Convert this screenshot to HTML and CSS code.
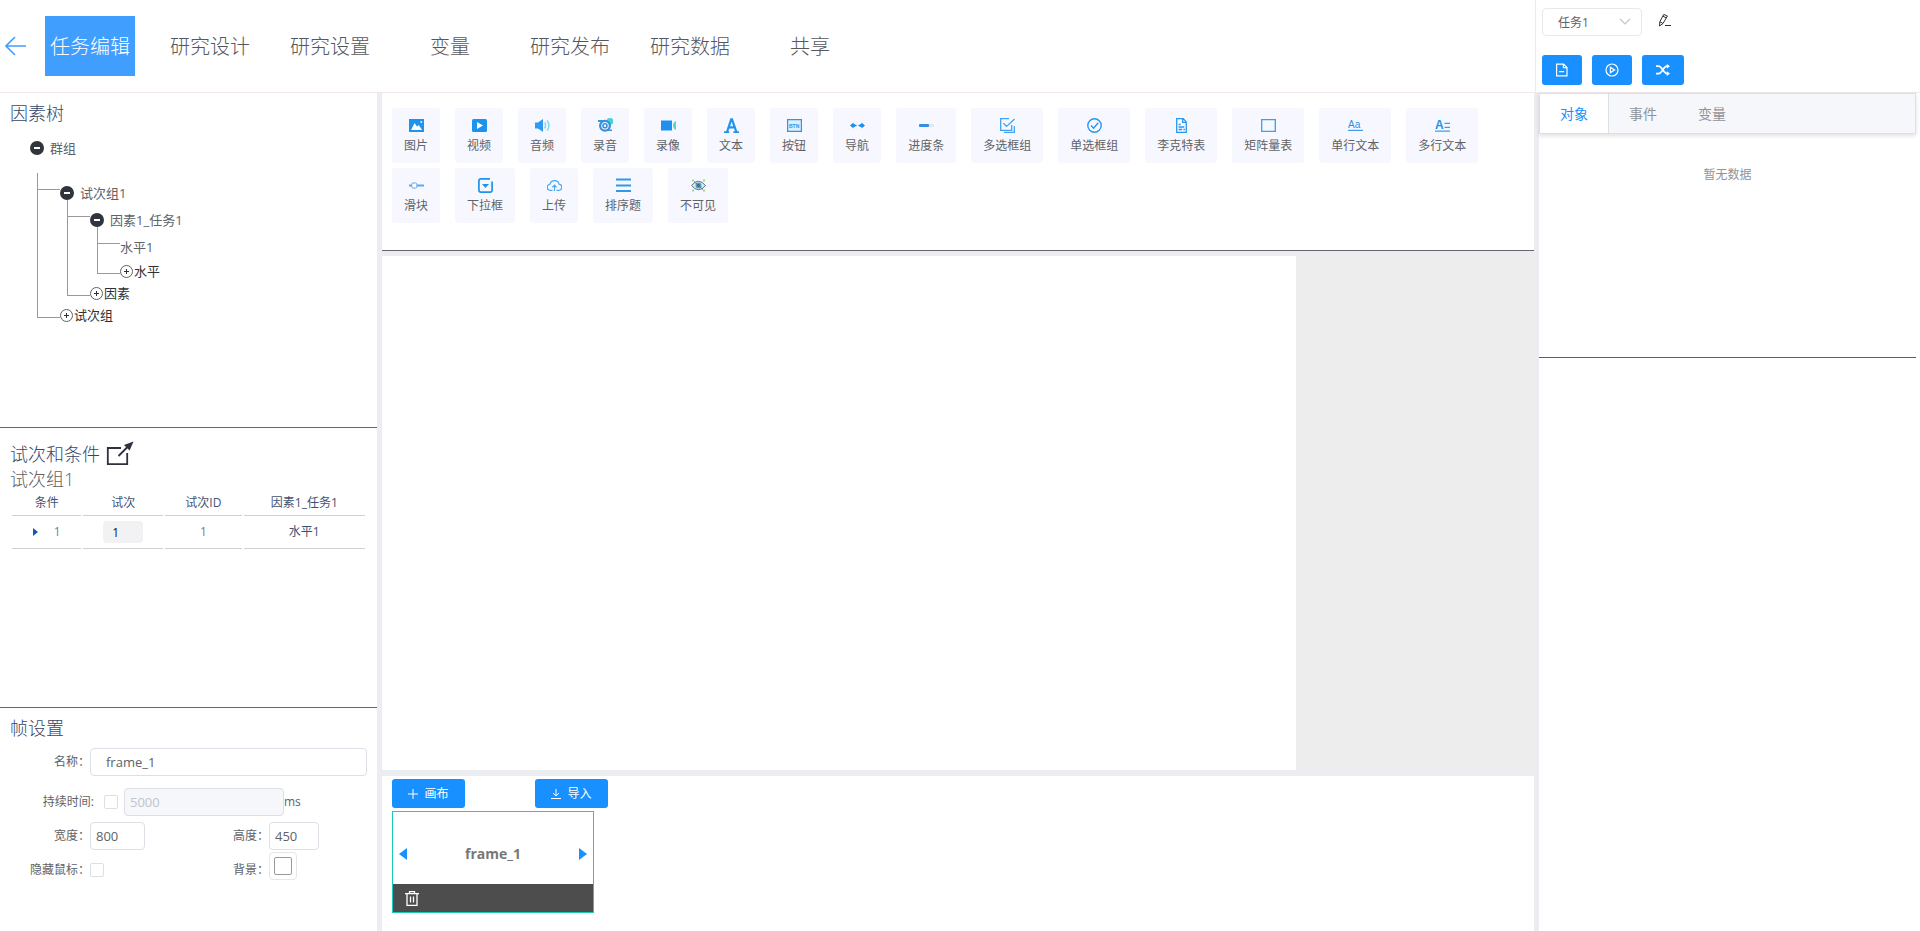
FILE: index.html
```html
<!DOCTYPE html>
<html lang="zh-CN">
<head>
<meta charset="utf-8">
<meta name="viewport" content="width=device-width, initial-scale=1">
<title>任务编辑</title>
<link rel="stylesheet" href="styles.css">
</head>
<body>
<div class="app">
  <header class="topbar">
    <nav class="topnav">
      <a class="back" href="#" aria-label="返回"><svg width="21" height="20" viewBox="0 0 21 20"><path d="M10 1 1 10l9 9M1 10h20" fill="none" stroke="#409eff" stroke-width="1.6"/></svg></a>
      <a class="navlink navlink-active" href="#">任务编辑</a>
      <a class="navlink" href="#">研究设计</a>
      <a class="navlink" href="#">研究设置</a>
      <a class="navlink" href="#">变量</a>
      <a class="navlink" href="#">研究发布</a>
      <a class="navlink" href="#">研究数据</a>
      <a class="navlink" href="#">共享</a>
    </nav>
    <div class="taskbar">
      <div class="taskrow">
        <div class="picker">
          <select class="picker-select" aria-label="任务"><option>任务1</option></select>
          <svg class="picker-arrow" width="12" height="8" viewBox="0 0 12 8"><path d="m1 1 5 5 5-5" fill="none" stroke="#c0c4cc" stroke-width="1.2"/></svg>
        </div>
        <button class="iconbtn" type="button" aria-label="编辑"><svg width="14" height="14" viewBox="0 0 14 14" fill="none" stroke="#303133"><path d="M5.8 1.4 9.400 3 5 10.500 1.500 13l.3-4.200zM4.800 3.100 8.400 4.900M1.900 8.700 5 10.500M7 12.500h6"/></svg></button>
      </div>
      <div class="taskrow taskrow-actions">
        <button class="primary primary-icon" type="button" aria-label="文件"><svg width="14" height="14" viewBox="0 0 14 14" fill="none" stroke="#fff" stroke-width="1.2"><path d="M1.6 1.1h7L12 4.4v8.5H1.6zM8.4 1.2v3.5H12M4.2 8.6h5"/></svg></button>
        <button class="primary primary-icon" type="button" aria-label="运行"><svg width="14" height="14" viewBox="0 0 14 14" fill="none" stroke="#fff" stroke-width="1.2"><circle cx="7" cy="7" r="6"/><path d="M5.4 4.4v5.2L9.6 7z"/></svg></button>
        <button class="primary primary-icon primary-wide" type="button" aria-label="随机"><svg width="14" height="12" viewBox="0 0 14 12"><path d="M0 2.2h2.6c3.2 0 5 7.4 8.4 7.4h1M0 9.6h2.6c3.2 0 5-7.4 8.4-7.4h1" fill="none" stroke="#fff" stroke-width="1.7"/><path d="M10.8 0 14 2.2l-3.2 2.4zM10.8 7.2 14 9.6 10.8 12z" fill="#fff"/></svg></button>
      </div>
    </div>
  </header>

  <main class="workspace">
    <aside class="leftcol">
      <section class="panel panel-tree">
        <h2 class="title">因素树</h2>
        <div class="node root"><span class="minus"></span><span class="node-name">群组</span></div>
        <ul class="tree">
          <li class="branch">
            <div class="node"><span class="minus"></span><span class="node-name">试次组1</span></div>
            <ul class="subtree">
              <li class="branch">
                <div class="node"><span class="minus"></span><span class="node-name">因素1_任务1</span></div>
                <ul class="subtree">
                  <li class="branch"><div class="node">水平1</div></li>
                  <li class="branch branch-add"><button class="add" type="button"><span class="plus"></span>水平</button></li>
                </ul>
              </li>
              <li class="branch branch-add"><button class="add" type="button"><span class="plus"></span>因素</button></li>
            </ul>
          </li>
          <li class="branch branch-add"><button class="add" type="button"><span class="plus"></span>试次组</button></li>
        </ul>
      </section>

      <section class="panel panel-trials">
        <div class="titlerow">
          <h2 class="title">试次和条件</h2>
          <button class="iconbtn" type="button" aria-label="展开"><svg width="28" height="25" viewBox="0 0 28 25"><path d="M15 7H1.8v16.2h19.4V12M12.5 15 22 5.5" fill="none" stroke="#303040" stroke-width="1.8"/><path d="M27.5.5 23.6 9.6 18 4z" fill="#303040"/></svg></button>
        </div>
        <p class="groupname">试次组1</p>
        <table class="trials">
          <colgroup><col class="c1"><col class="c2"><col class="c3"><col class="c4"></colgroup>
          <thead><tr><th>条件</th><th>试次</th><th>试次ID</th><th>因素1_任务1</th></tr></thead>
          <tbody><tr>
            <td class="muted"><span class="cond"><svg width="5" height="8" viewBox="0 0 5 8"><path d="M0 0v8l5-4z" fill="#1557b8"/></svg>1</span></td>
            <td><input class="trialcount" aria-label="试次" value="1"></td>
            <td class="muted">1</td>
            <td>水平1</td>
          </tr></tbody>
        </table>
      </section>

      <section class="panel panel-frame">
        <h2 class="title">帧设置</h2>
        <form class="form">
          <div class="row row-name"><label class="label" for="name">名称：</label><input class="field field-name" id="name" value="frame_1"></div>
          <div class="row row-time"><label class="label label-time" for="usetime">持续时间:</label><input class="check" type="checkbox" id="usetime"><input class="field field-time" aria-label="持续时间毫秒" value="5000" disabled><span>ms</span></div>
          <div class="row row-pair">
            <div class="row"><label class="label" for="w">宽度：</label><input class="field field-w" id="w" value="800"></div>
            <div class="row"><label class="label" for="h">高度：</label><input class="field field-h" id="h" value="450"></div>
          </div>
          <div class="row row-pair row-last">
            <div class="row"><label class="label" for="hide">隐藏鼠标：</label><input class="check" type="checkbox" id="hide"></div>
            <div class="row"><label class="label" for="bg">背景：</label><button class="swatch" type="button" id="bg" aria-label="背景颜色"><span class="swatch-color"></span></button></div>
          </div>
        </form>
      </section>
    </aside>

    <div class="center">
      <section class="toolbox">
        <button class="tool" type="button"><svg class="ico" viewBox="0 0 15 15"><path d="M0 1h15v13H0z" fill="#1e93ec"/><path d="m2 12 3.6-7L8 8.6 9.8 7l3.2 5zM11.4 3.2h1.8v1.6h-1.8z" fill="#fff"/></svg>图片</button>
        <button class="tool" type="button"><svg class="ico" viewBox="0 0 15 15"><rect y="1" width="15" height="13" rx="1.5" fill="#1e93ec"/><path d="m5 4 6 3.5L5 11z" fill="#fff"/></svg>视频</button>
        <button class="tool" type="button"><svg class="ico" viewBox="0 0 15 15"><path d="M0 4.5h3L8 1v13L3 10.5H0z" fill="#2e9bee"/><path d="M9.6 4.5q2 3 0 6M12 2.5q4 5 0 10" fill="none" stroke="#7fd8f2" stroke-width="1.5"/></svg>音频</button>
        <button class="tool" type="button"><svg class="ico" viewBox="0 0 15 15"><circle cx="12" cy="3.4" r="3.4" fill="#3fd8d0"/><path d="M0 2h6v2H0zM9 11.500h5v1.500H9z" fill="#3b95dd"/><circle cx="7" cy="7.800" r="6" fill="#3b8fdc"/><circle cx="7" cy="7.800" r="3.400" fill="none" stroke="#fff"/><circle cx="7" cy="7.800" r="1.200" fill="#fff"/></svg>录音</button>
        <button class="tool" type="button"><svg class="ico" viewBox="0 0 15 15"><path d="M0 2.5h11v10H0z" fill="#2090ee"/><path d="M15 3v9q-3-1.4-3-4.5T15 3z" fill="#58d5cf"/></svg>录像</button>
        <button class="tool" type="button"><svg class="ico" viewBox="0 0 15 15"><path d="M3 14 7.2 1.4h.8L12.4 14M4.6 9.3h6" fill="none" stroke="#2492e8" stroke-width="2.2"/><path d="M0 13.2h5.2V15H0zM9.4 13.2H15V15H9.4z" fill="#2492e8"/></svg>文本</button>
        <button class="tool" type="button"><svg class="ico" viewBox="0 0 15 15"><path d="M.6 1.6h13.8v11.8H.6z" fill="#deeffc" stroke="#2b96ea" stroke-width="1.2"/><text x="2" y="10" class="ico-letter ico-letter-xs">BTN</text></svg>按钮</button>
        <button class="tool" type="button"><svg class="ico" viewBox="0 0 15 15"><path d="M1 7.5h13" stroke="#1f90ea" stroke-width="1.4" stroke-dasharray="5.6 1.8"/><path d="M0 7.5 3.5 4.6v5.8zM15 7.5l-3.5-2.9v5.8z" fill="#1f90ea"/><circle cx="3.6" cy="7.5" r="1.8" fill="#1f90ea"/><circle cx="11.4" cy="7.5" r="1.8" fill="#1f90ea"/></svg>导航</button>
        <button class="tool" type="button"><svg class="ico" viewBox="0 0 15 15"><rect y="6" width="15" height="3" rx="1" fill="#e2e6ec"/><rect y="6" width="10" height="3" rx="1" fill="#318fe5"/></svg>进度条</button>
        <button class="tool" type="button"><svg class="ico" viewBox="0 0 15 15"><path d="M9 .7H.7v11.6h11V7M4 14.4h10.4V8M3.4 5.2l3.2 3.2L14.6 1" fill="none" stroke="#41a3ef" stroke-width="1.3"/></svg>多选框组</button>
        <button class="tool" type="button"><svg class="ico" viewBox="0 0 15 15"><circle cx="7.5" cy="7.5" r="6.7" fill="none" stroke="#2a97ed" stroke-width="1.4"/><path d="m4 7.4 2.6 2.8 4.6-5.4" fill="none" stroke="#2a97ed" stroke-width="1.4"/></svg>单选框组</button>
        <button class="tool" type="button"><svg class="ico" viewBox="0 0 15 15"><path d="M2.7.7h6.6l3 3.2v10.4H2.7zM8.6.8v3.6h3.6M4.6 6.5h2M4.6 9h5.6M4.6 11.5h3.6M9.5 11.5h1.4" fill="none" stroke="#2a97ed" stroke-width="1.3"/></svg>李克特表</button>
        <button class="tool" type="button"><svg class="ico" viewBox="0 0 15 15"><path d="M.7 1.7h13.6v11.6H.7z" fill="none" stroke="#3b9fee" stroke-width="1.3"/></svg>矩阵量表</button>
        <button class="tool" type="button"><svg class="ico" viewBox="0 0 15 15"><text x="0" y="10" class="ico-letter ico-letter-s">Aa</text><path d="M0 12.4h15" stroke="#3b9fee" stroke-width="1.2"/></svg>单行文本</button>
        <button class="tool" type="button"><svg class="ico" viewBox="0 0 15 15"><text x="0" y="11" class="ico-letter">A</text><path d="M9.5 5.4H15M9.5 9.4H15M0 13.2h15" stroke="#3b9fee" stroke-width="1.3"/></svg>多行文本</button>
        <button class="tool" type="button"><svg class="ico" viewBox="0 0 15 15"><path d="M0 7.5h3M8 7.5h7" stroke="#5aa9ef" stroke-width="2"/><rect x="2.8" y="5" width="5" height="5" rx="1.2" fill="#fff" stroke="#5aa9ef"/></svg>滑块</button>
        <button class="tool" type="button"><svg class="ico" viewBox="0 0 15 15"><path d="M12 .9H3Q.9.9.9 3v9q0 2.100 2.100 2.100h9q2.100 0 2.100-2.100V3.600" fill="none" stroke="#1e93ec" stroke-width="1.700"/><path d="M4 6h7L7.500 10z" fill="#1e93ec"/></svg>下拉框</button>
        <button class="tool" type="button"><svg class="ico" viewBox="0 0 15 15"><path d="M5.500 12.400H3.700A3.100 3.100 0 0 1 3 6.200 4.600 4.600 0 0 1 12 6.200a3.100 3.100 0 0 1-.7 6.200H9.500M7.500 13V7.200M5.300 9.300l2.200-2.200 2.200 2.200" fill="none" stroke="#4ba6f0" stroke-width="1.200"/></svg>上传</button>
        <button class="tool" type="button"><svg class="ico" viewBox="0 0 15 15"><path d="M0 1.500h15M0 7.500h15M0 13h15" stroke="#2f98ea" stroke-width="1.800"/></svg>排序题</button>
        <button class="tool" type="button"><svg class="ico" viewBox="0 0 15 15"><path d="M.5 7.500q7-8.500 14 0-7 8.500-14 0z" fill="#d6edf2" stroke="#5b7490"/><circle cx="7.500" cy="7.500" r="3" fill="#4fa3bd"/><circle cx="7.500" cy="7.500" r="1.200" fill="#334a68"/><path d="m3 3.500 9 8" stroke="#5b7490"/><path d="M1 2.500h2M12 2.500h2M1 12.500h2M12 12.500h2" stroke="#a4d58c" stroke-width="1.800"/></svg>不可见</button>
      </section>
      <section class="stage"><div class="canvas"></div></section>
      <section class="frames">
        <div class="frames-actions">
          <button class="primary primary-text" type="button"><svg width="10" height="10" viewBox="0 0 10 10"><path d="M5 0v10M0 5h10" stroke="#fff"/></svg>画布</button>
          <button class="primary primary-text" type="button"><svg width="10" height="10" viewBox="0 0 10 10"><path d="M5 0v7M2 4l3 3 3-3M0 9.500h10" fill="none" stroke="#fff"/></svg>导入</button>
        </div>
        <article class="card">
          <div class="card-body">
            <button class="iconbtn" type="button" aria-label="前移"><svg width="8" height="12" viewBox="0 0 8 12"><path d="M8 0v12L0 6z" fill="#1890ff"/></svg></button>
            <strong class="card-name">frame_1</strong>
            <button class="iconbtn" type="button" aria-label="后移"><svg width="8" height="12" viewBox="0 0 8 12"><path d="M0 0v12l8-6z" fill="#1890ff"/></svg></button>
          </div>
          <div class="card-foot"><button class="iconbtn" type="button" aria-label="删除"><svg width="14" height="15" viewBox="0 0 14 15"><path d="M0 2.700h14M4.500 2.500V.700h5v1.800M2 3v11.300h10V3M5.500 5.500v6M8.500 5.500v6" fill="none" stroke="#fff" stroke-width="1.300"/></svg></button></div>
        </article>
      </section>
    </div>

    <aside class="rightcol">
      <section class="props">
        <div class="tabs">
          <button class="tab tab-active" type="button">对象</button>
          <button class="tab" type="button">事件</button>
          <button class="tab" type="button">变量</button>
        </div>
        <p class="empty">暂无数据</p>
      </section>
    </aside>
  </main>
</div>
</body>
</html>
```

FILE: styles.css
```css
* {
  box-sizing: border-box;
}

body {
  margin: 0;
  color: #606266;
  background: #fff;
  font-family: "Open Sans", "Noto Sans CJK SC", sans-serif;
  font-size: 12px;
  font-weight: 400;
  line-height: 16px;
}

button,
input,
select {
  margin: 0;
  padding: 0;
  border: 0;
  color: inherit;
  background: none;
  font: inherit;
}

h2,
p,
ul {
  margin: 0;
  padding: 0;
  font-weight: inherit;
  list-style: none;
}

svg {
  display: block;
}

a {
  color: inherit;
  text-decoration: none;
}

.app {
  display: flex;
  flex-direction: column;
  min-height: 100vh;
}

/* Top bar */
.topbar {
  display: grid;
  grid-template-columns: 1535fr 385fr;
  border-bottom: 1px solid #f0e8ea;
}

.topnav {
  display: flex;
  align-items: center;
  gap: 30px;
  padding: 16px 5px;
}

.back {
  margin-right: -11px;
}

.navlink {
  width: 90px;
  padding-top: 2px;
  color: #55575c;
  font-size: 20px;
  font-weight: 300;
  line-height: 58px;
  text-align: center;
  white-space: nowrap;
}

.navlink-active {
  color: #fff;
  background: #409eff;
}

.taskbar {
  display: flex;
  flex-direction: column;
  gap: 19px;
  padding: 8px 6px 7px;
  border-left: 1px solid #f0e8ea;
}

.taskrow {
  display: flex;
  align-items: flex-start;
  gap: 16px;
}

.taskrow-actions {
  gap: 10px;
}

.picker {
  position: relative;
}

.picker-select {
  width: 100px;
  height: 28px;
  padding: 1px 15px 0;
  border: 1px solid #e6e8ee;
  border-radius: 4px;
  appearance: none;
}

.picker-arrow {
  position: absolute;
  top: 10px;
  right: 11px;
  pointer-events: none;
}

.iconbtn {
  flex: none;
  cursor: pointer;
}

.taskrow .iconbtn {
  padding-top: 5px;
}

.primary {
  display: flex;
  align-items: center;
  justify-content: center;
  border-radius: 3px;
  color: #fff;
  background: #1890ff;
}

.primary-icon {
  width: 40px;
  height: 30px;
}

.primary-wide {
  width: 42px;
}

.primary-text {
  gap: 6px;
  width: 73px;
  height: 29px;
}

/* Workspace columns */
.workspace {
  display: grid;
  flex: 1;
  grid-template-columns: 377fr 1152fr 381fr;
  gap: 5px;
  background: #ebedf0;
}

.leftcol {
  display: grid;
  grid-template-rows: 335fr 280fr 223fr;
  background: #fff;
}

.panel {
  padding: 0 10px;
  border-bottom: 1px solid #666;
}

.title {
  color: #34476a;
  font-size: 18px;
  font-weight: 300;
  line-height: 24px;
}

/* Factor tree */
.panel-tree {
  padding-top: 8px;
  font-size: 13px;
}

.node,
.add {
  display: flex;
  align-items: center;
  height: 27px;
  padding-bottom: 2px;
}

.node-name {
  padding-left: 6px;
}

.root {
  margin: 10px 20px 18px;
}

.minus,
.plus {
  position: relative;
  flex: none;
  width: 14px;
  height: 14px;
  border-radius: 50%;
}

.minus {
  background: #2f343d;
}

.minus::after {
  content: "";
  position: absolute;
  top: 6px;
  left: 4px;
  width: 6px;
  height: 2px;
  background: #fff;
}

.plus {
  margin-right: 1px;
  width: 13px;
  height: 13px;
  border: 1px solid #606266;
}

.plus::before,
.plus::after {
  content: "";
  position: absolute;
  top: 5px;
  left: 3px;
  width: 5px;
  height: 1px;
  background: #303133;
}

.plus::after {
  transform: rotate(90deg);
}

.tree {
  margin-left: 27px;
}

.subtree {
  margin-left: 7px;
}

.branch {
  position: relative;
  padding-left: 23px;
}

.branch::before {
  content: "";
  position: absolute;
  top: -7px;
  bottom: 0;
  left: 0;
  border-left: 1px solid #999;
}

.branch::after {
  content: "";
  position: absolute;
  top: 9px;
  left: 0;
  width: 23px;
  border-top: 1px solid #999;
}

.branch-add::before {
  bottom: 9px;
}

.branch-add::after {
  top: 12px;
}

.add {
  height: 22px;
  color: #303133;
}

/* Trials table */
.panel-trials {
  padding-top: 13px;
}

.titlerow {
  display: flex;
  gap: 6px;
  padding-bottom: 1px;
}

.titlerow .title {
  padding-top: 1px;
}

.groupname {
  font-size: 18px;
  font-weight: 300;
  line-height: 24px;
}

.trials {
  width: 100%;
  border-spacing: 2px 0;
  table-layout: fixed;
  color: #3f5273;
}

.c1 {
  width: 20%;
}

.c2 {
  width: 23%;
}

.c3 {
  width: 22%;
}

.trials th,
.trials td {
  height: 25px;
  padding: 0;
  border-bottom: 1px solid #d0d0d0;
  font-weight: inherit;
  text-align: center;
}

.trials td {
  height: 33px;
}

.trials .muted {
  color: #7b7f88;
}

.cond {
  display: flex;
  align-items: center;
  justify-content: center;
  gap: 16px;
}

.trialcount {
  width: 40px;
  height: 22px;
  padding: 0 9px;
  border-radius: 4px;
  color: #111;
  background: #f2f2f5;
}

/* Frame settings */
.panel-frame {
  padding-top: 8px;
  padding-left: 0;
  border-bottom: 0;
}

.panel-frame .title {
  padding-left: 10px;
}

.form {
  padding-top: 8px;
}

.row {
  display: flex;
  align-items: center;
}

.row-time {
  margin: 12px 0 6px;
}

.row-pair {
  display: grid;
  grid-template-columns: 179fr 188fr;
}

.row-last {
  padding-top: 2px;
}

.row-last .label,
.row-last .check {
  margin-top: 8px;
}

.label {
  flex: none;
  width: 90px;
  text-align: right;
}

.label-time {
  width: 94px;
  margin-right: 10px;
}

.field {
  min-width: 0;
  height: 28px;
  padding: 0 5px;
  border: 1px solid #dcdfe6;
  border-radius: 4px;
  font-size: 13px;
}

.field-name {
  flex: 1;
  padding-left: 15px;
}

.field-time {
  flex: none;
  width: 160px;
  margin-left: 6px;
  color: #c0c4cc;
  background: #f5f7fa;
}

.field-w {
  width: 55px;
}

.field-h {
  width: 50px;
}

.check {
  flex: none;
  width: 14px;
  height: 14px;
  border: 1px solid #dcdfe6;
  border-radius: 2px;
  background: #fff;
  appearance: none;
}

.swatch {
  width: 28px;
  height: 28px;
  padding: 4px;
  border: 1px solid #e6e6e6;
  border-radius: 4px;
}

.swatch-color {
  display: block;
  height: 18px;
  border: 1px solid #999;
  border-radius: 2px;
}

/* Centre column */
.center {
  display: flex;
  flex-direction: column;
  min-width: 0;
}

.toolbox {
  display: flex;
  flex-wrap: wrap;
  gap: 5px 15px;
  padding: 15px 10px 27px;
  border-bottom: 1px solid #666;
  background: #fff;
}

.tool {
  display: flex;
  flex-direction: column;
  align-items: center;
  gap: 5px;
  height: 55px;
  padding: 10px 12px 9px;
  border-radius: 3px;
  background: #f7f8ff;
}

.ico {
  width: 15px;
  height: 15px;
}

.ico-letter {
  fill: #2492e8;
  font-family: "Liberation Sans", sans-serif;
  font-size: 12px;
  font-weight: 700;
}

.ico-letter-s {
  font-size: 10px;
  font-weight: 400;
}

.ico-letter-xs {
  font-size: 5px;
}

.stage {
  display: flex;
  flex: 1;
  margin: 5px 0 6px;
  background: #ededed;
}

.canvas {
  aspect-ratio: 16 / 9;
  background: #fff;
}

.frames {
  padding: 3px 10px 18px;
  background: #fff;
}

.frames-actions {
  display: flex;
  gap: 70px;
}

.card {
  width: 202px;
  margin-top: 3px;
  border: 1px solid #1dc9b7;
}

.card-body {
  display: flex;
  align-items: center;
  justify-content: space-between;
  height: 72px;
  padding: 11px 6px 0;
}

.card-name {
  color: #777;
  font-size: 14px;
  font-weight: 700;
  line-height: 20px;
}

.card-foot {
  display: flex;
  align-items: center;
  height: 28px;
  padding: 0 12px;
  background: #4d4d4d;
}

/* Right column */
.rightcol {
  padding-right: 4px;
  background: #fff;
}

.props {
  min-height: 265px;
  border-bottom: 1px solid #5c5f66;
}

.tabs {
  display: flex;
  border: 1px solid #dcdfe6;
  background: #f5f7fa;
  box-shadow: 0 2px 4px rgba(0, 0, 0, 0.12);
}

.tab {
  height: 39px;
  padding: 0 20px;
  border-right: 1px solid transparent;
  color: #909399;
  font-size: 14px;
}

.tab-active {
  border-right-color: #dcdfe6;
  color: #1890ff;
  background: #fff;
}

.empty {
  padding-top: 33px;
  color: #909399;
  text-align: center;
}
```
